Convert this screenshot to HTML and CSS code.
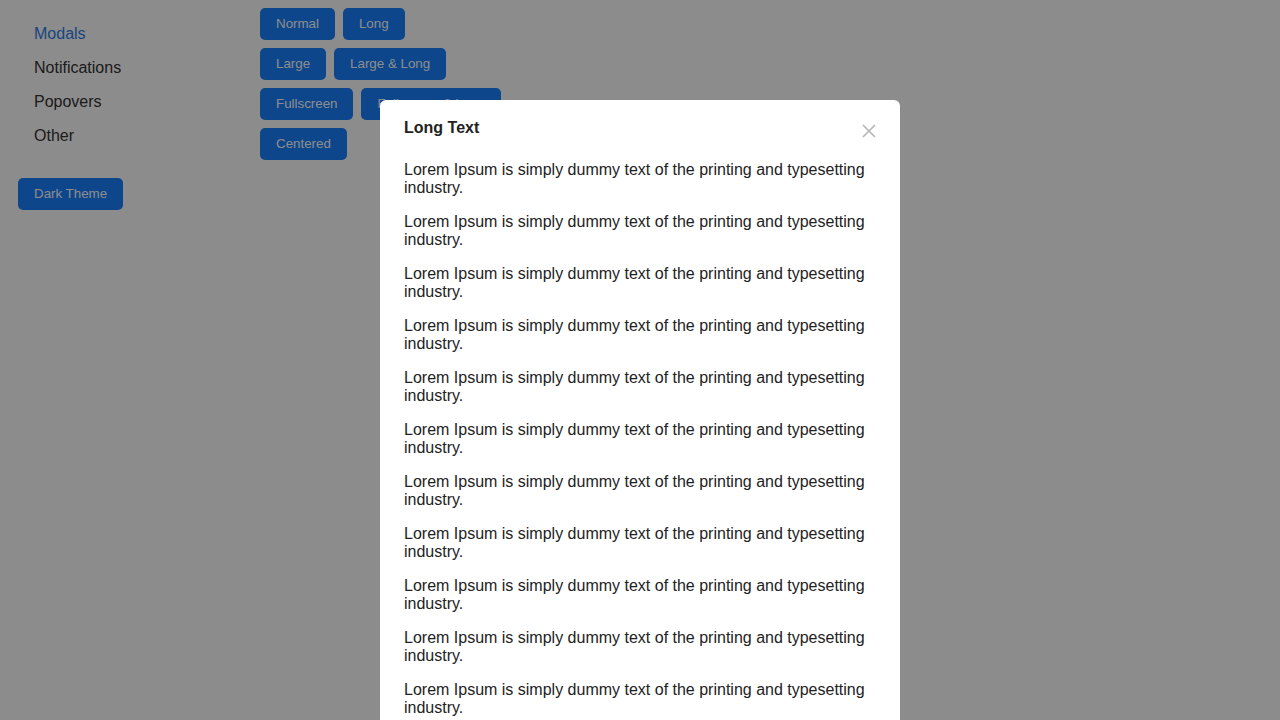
FILE: index.html
```html
<!DOCTYPE html>
<html lang="en">
<head>
<meta charset="utf-8">
<title>Modals</title>
<link rel="stylesheet" href="styles.css">
</head>
<body>
<div class="app">
  <aside class="sidebar">
    <ul class="nav">
      <li><a class="nav-link active" href="#">Modals</a></li>
      <li><a class="nav-link" href="#">Notifications</a></li>
      <li><a class="nav-link" href="#">Popovers</a></li>
      <li><a class="nav-link" href="#">Other</a></li>
    </ul>
    <button class="btn">Dark Theme</button>
  </aside>
  <main class="main">
    <div class="row"><button class="btn">Normal</button><button class="btn">Long</button></div>
    <div class="row"><button class="btn">Large</button><button class="btn">Large &amp; Long</button></div>
    <div class="row"><button class="btn">Fullscreen</button><button class="btn">Fullscreen &amp; Long</button></div>
    <div class="row"><button class="btn">Centered</button></div>
  </main>
</div>
<div class="overlay">
  <div class="modal">
    <div class="modal-header">
      <h2 class="modal-title">Long Text</h2>
      <button class="close" aria-label="Close">
        <svg width="14" height="14" viewBox="0 0 14 14"><path d="M1 1L13 13M13 1L1 13" stroke="#b5b5b5" stroke-width="1.6" fill="none"/></svg>
      </button>
    </div>
    <div class="modal-body">
      <p>Lorem Ipsum is simply dummy text of the printing and typesetting industry.</p>
      <p>Lorem Ipsum is simply dummy text of the printing and typesetting industry.</p>
      <p>Lorem Ipsum is simply dummy text of the printing and typesetting industry.</p>
      <p>Lorem Ipsum is simply dummy text of the printing and typesetting industry.</p>
      <p>Lorem Ipsum is simply dummy text of the printing and typesetting industry.</p>
      <p>Lorem Ipsum is simply dummy text of the printing and typesetting industry.</p>
      <p>Lorem Ipsum is simply dummy text of the printing and typesetting industry.</p>
      <p>Lorem Ipsum is simply dummy text of the printing and typesetting industry.</p>
      <p>Lorem Ipsum is simply dummy text of the printing and typesetting industry.</p>
      <p>Lorem Ipsum is simply dummy text of the printing and typesetting industry.</p>
      <p>Lorem Ipsum is simply dummy text of the printing and typesetting industry.</p>
      <p>Lorem Ipsum is simply dummy text of the printing and typesetting industry.</p>
      <p>Lorem Ipsum is simply dummy text of the printing and typesetting industry.</p>
      <p>Lorem Ipsum is simply dummy text of the printing and typesetting industry.</p>
    </div>
  </div>
</div>
</body>
</html>
```
FILE: styles.css
```css
html, body {
  margin: 0;
  padding: 0;
  height: 100%;
  overflow: hidden;
  background: #fff;
  font-family: "Liberation Sans", Arial, sans-serif;
  color: #333;
}

.app {
  display: flex;
  align-items: flex-start;
}

.sidebar {
  width: 242px;
  padding: 17px 0 0 18px;
  display: flex;
  flex-direction: column;
  align-items: flex-start;
}

.nav {
  list-style: none;
  margin: 0 0 25px;
  padding: 0 0 0 16px;
}

.nav-link {
  display: block;
  padding: 8px 0;
  font-size: 16px;
  line-height: 18px;
  color: #333;
  text-decoration: none;
}

.nav-link.active {
  color: #2f7ee6;
}

.main {
  padding-top: 8px;
  display: flex;
  flex-direction: column;
  gap: 8px;
}

.row {
  display: flex;
  gap: 8px;
}

.btn {
  font-family: "Liberation Sans", Arial, sans-serif;
  font-size: 13.333px;
  line-height: 16px;
  padding: 8px 16px;
  border: none;
  border-radius: 5px;
  background: #1a80ff;
  color: #fff;
  cursor: pointer;
}

.overlay {
  position: fixed;
  inset: 0;
  background: rgba(0, 0, 0, 0.45);
  overflow: hidden;
}

.modal {
  width: 520px;
  margin: 100px auto 0;
  background: #fff;
  border-radius: 6px;
  padding: 19px 24px 24px;
  box-sizing: border-box;
}

.modal-header {
  display: flex;
  justify-content: space-between;
  align-items: flex-start;
}

.modal-title {
  margin: 0;
  font-size: 16px;
  line-height: 18px;
  font-weight: bold;
  color: #222;
}

.close {
  border: none;
  background: none;
  padding: 0;
  margin-top: 5px;
  width: 14px;
  height: 14px;
  display: flex;
  cursor: pointer;
}

.modal-body {
  padding-top: 7px;
}

.modal-body p {
  margin: 16px 0;
  font-size: 16px;
  line-height: 18px;
  color: #222;
}
```
